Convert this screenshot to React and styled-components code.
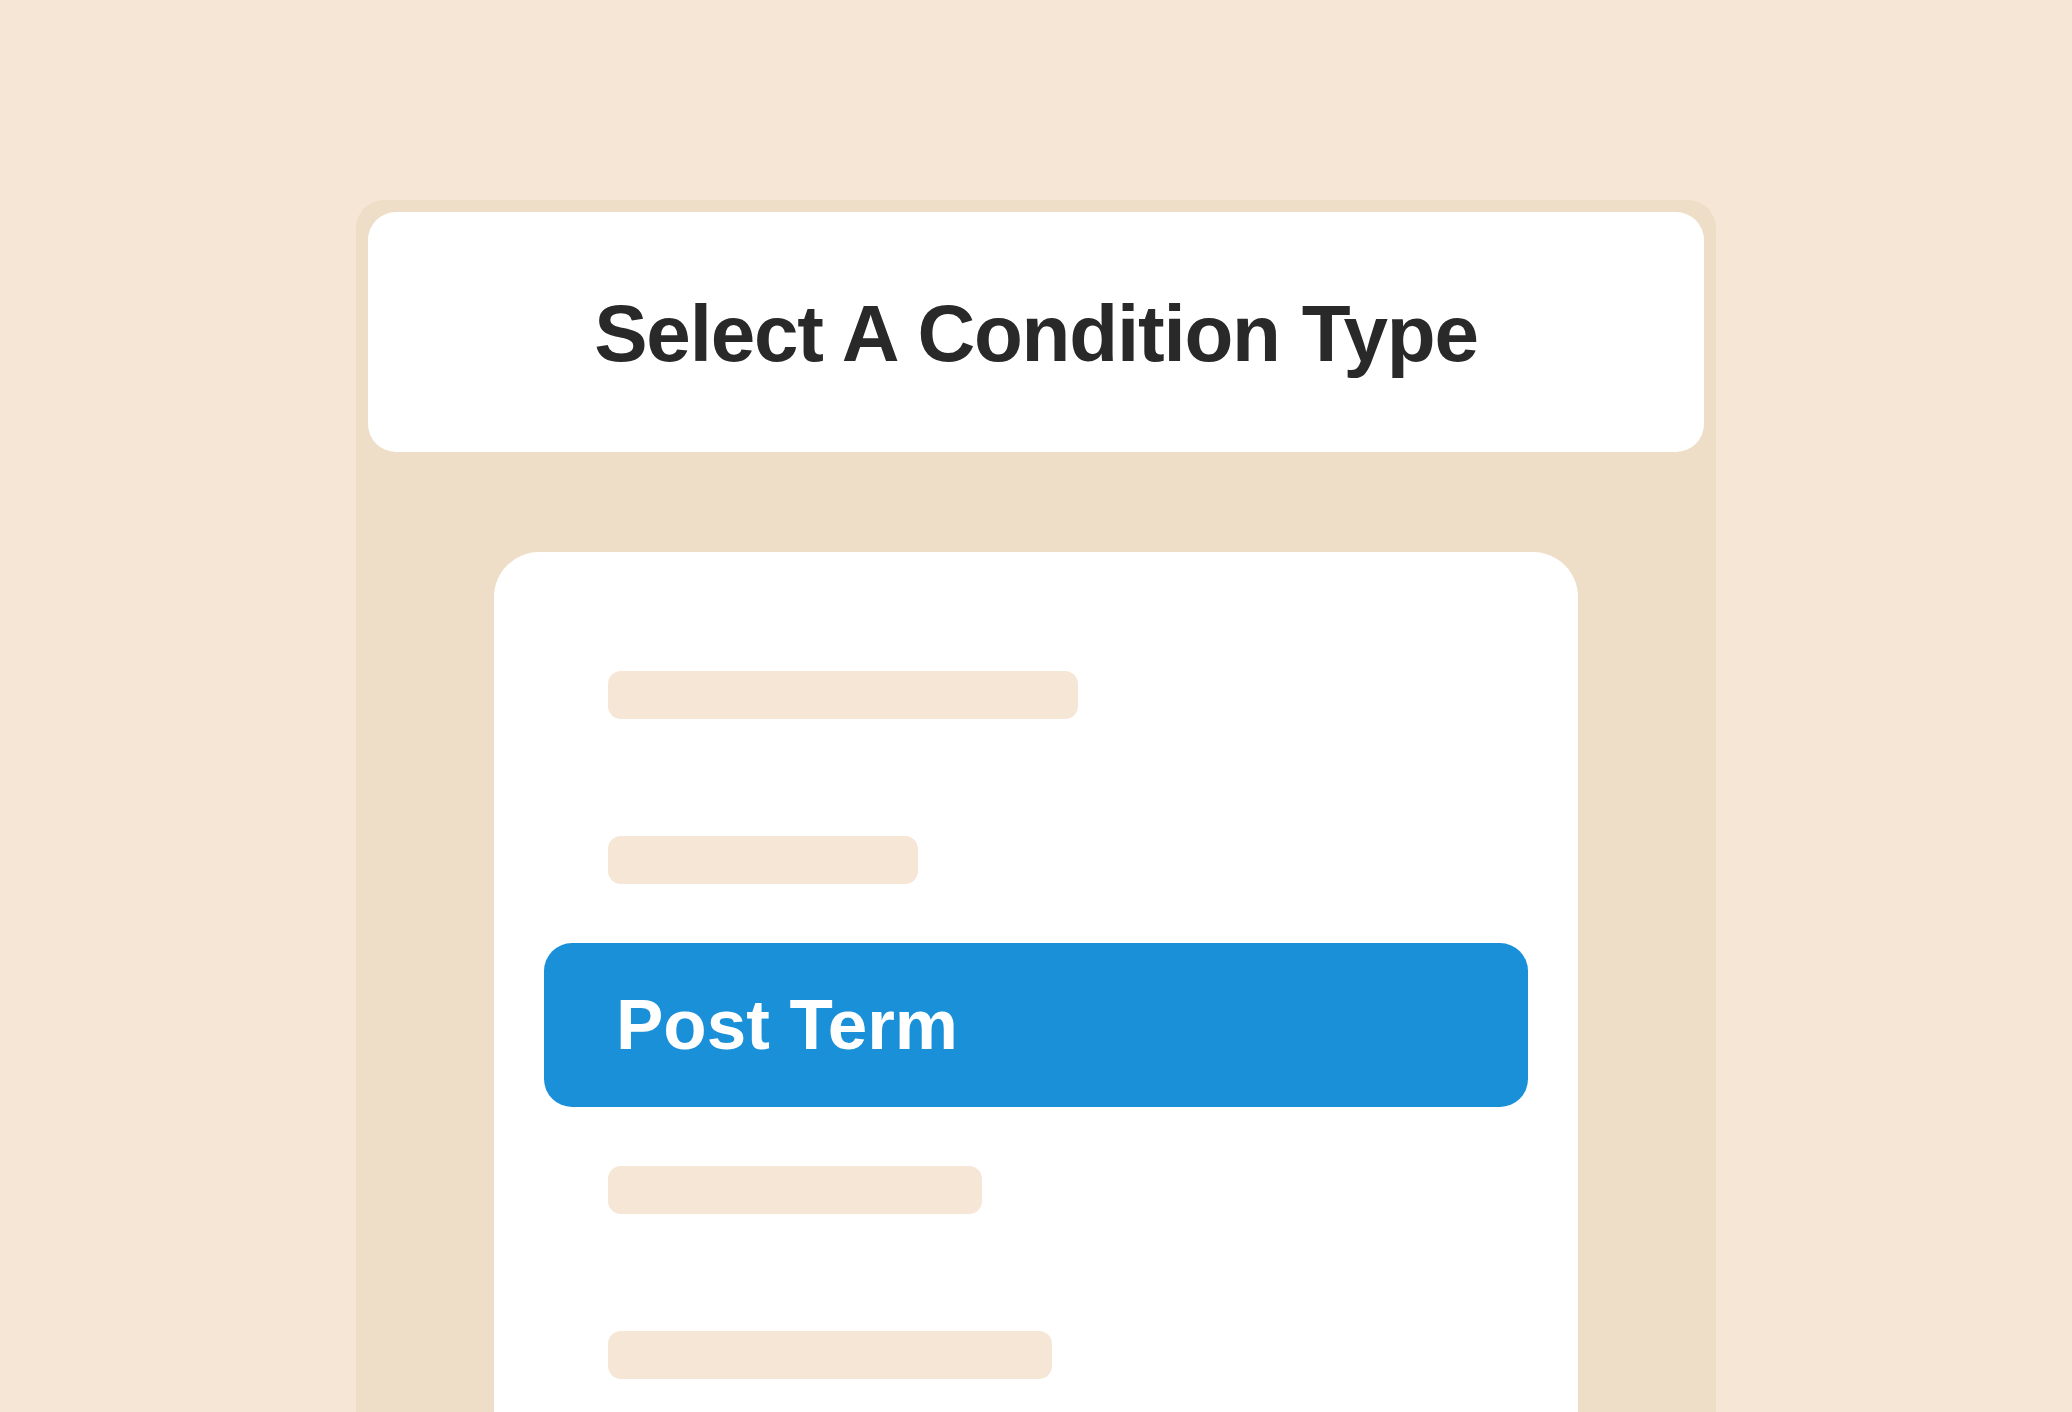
import React from "react";
import styled, { createGlobalStyle } from "styled-components";

const GlobalStyle = createGlobalStyle`
  html, body {
    margin: 0;
    padding: 0;
    background: #F6E6D5;
    overflow: hidden;
  }
  body {
    font-family: "Liberation Sans", Arial, Helvetica, sans-serif;
  }
`;

const Page = styled.div`
  width: 2072px;
  height: 1412px;
  overflow: hidden;
  display: flex;
  justify-content: center;
  padding-top: 200px;
  box-sizing: border-box;
  background: #F6E6D5;
`;

const Panel = styled.div`
  width: 1360px;
  height: 1300px;
  box-sizing: border-box;
  padding: 12px;
  background: #EFDEC7;
  border-radius: 28px;
  display: flex;
  flex-direction: column;
  align-items: center;
  gap: 100px;
`;

const Header = styled.div`
  width: 100%;
  height: 240px;
  flex-shrink: 0;
  background: #ffffff;
  border-radius: 28px;
  display: flex;
  align-items: center;
  justify-content: center;
`;

const Title = styled.h1`
  margin: 0;
  font-family: "Liberation Sans", Arial, Helvetica, sans-serif;
  font-weight: 700;
  font-size: 80px;
  letter-spacing: -1.2px;
  word-spacing: 1px;
  line-height: 1;
  color: #292929;
  padding-top: 4px;
`;

const ListCard = styled.div`
  width: 1084px;
  flex: 1;
  background: #ffffff;
  border-radius: 45px 45px 0 0;
  padding: 60px 50px 0;
  box-sizing: border-box;
  display: flex;
  flex-direction: column;
`;

const Row = styled.div`
  height: 165px;
  display: flex;
  align-items: center;
  padding-left: ${(p) => (p.$selected ? 0 : 64)}px;
`;

const Placeholder = styled.div`
  height: 48px;
  border-radius: 13px;
  background: #F6E6D5;
`;

const Selected = styled.div`
  width: 100%;
  height: 164px;
  border-radius: 28px;
  background: #1990D8;
  display: flex;
  align-items: center;
  padding-left: 72px;
  box-sizing: border-box;
  color: #ffffff;
  font-family: "Liberation Sans", Arial, Helvetica, sans-serif;
  font-weight: 700;
  font-size: 71px;
  letter-spacing: 0;
  line-height: 1;
`;

const items = [
  { width: 470 },
  { width: 310 },
  { label: "Post Term" },
  { width: 374 },
  { width: 444 },
];

export default function App() {
  return (
    <>
      <GlobalStyle />
      <Page>
        <Panel>
          <Header>
            <Title>Select A Condition Type</Title>
          </Header>
          <ListCard>
            {items.map((it, i) =>
              it.label ? (
                <Row key={i} $selected>
                  <Selected>{it.label}</Selected>
                </Row>
              ) : (
                <Row key={i}>
                  <Placeholder style={{ width: it.width }} />
                </Row>
              )
            )}
          </ListCard>
        </Panel>
      </Page>
    </>
  );
}
